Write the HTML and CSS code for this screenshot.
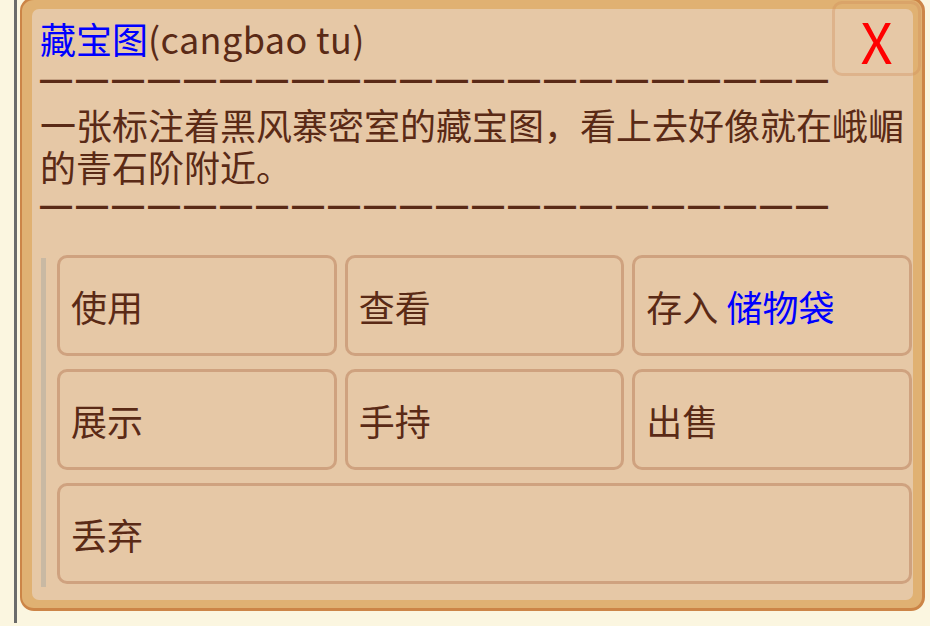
FILE: index.html
```html
<!DOCTYPE html>
<html lang="zh-CN">
<head>
<meta charset="utf-8">
<title>藏宝图</title>
<link rel="stylesheet" href="styles.css">
</head>
<body>
<div class="stage">
  <div class="dialog">
    <div class="panel">
      <div class="title"><span class="link">藏宝图</span><span class="pinyin">(cangbao tu)</span></div>
      <div class="rule">——————————————————————</div>
      <div class="desc">一张标注着黑风寨密室的藏宝图，看上去好像就在峨嵋的青石阶附近。</div>
      <div class="rule rule-end">——————————————————————</div>
      <div class="menu">
        <div class="menu-bar"></div>
        <div class="actions">
          <div class="action">使用</div>
          <div class="action">查看</div>
          <div class="action">存入&nbsp;<span class="link">储物袋</span></div>
          <div class="action">展示</div>
          <div class="action">手持</div>
          <div class="action">出售</div>
          <div class="action action-wide">丢弃</div>
        </div>
      </div>
    </div>
    <div class="close">X</div>
  </div>
</div>
</body>
</html>
```
FILE: styles.css
```css
html, body {
  margin: 0;
  padding: 0;
  background: #fbf6e0;
  overflow: hidden;
}

body {
  font-family: "Noto Sans CJK SC", "Noto Sans", sans-serif;
  color: #5a2a16;
}

.stage {
  height: 626px;
  margin-left: 14px;
  border-left: 3px solid #6b6b6b;
  padding-left: 3px;
  box-sizing: border-box;
}

.dialog {
  position: relative;
  width: 905px;
  margin-top: -3px;
  box-sizing: border-box;
  border: 3px solid #cc8547;
  border-left-width: 2px;
  border-radius: 14px;
  background: #e0b172;
  padding: 9px 9px 8px 10px;
}

.panel {
  background: #e6c8a6;
  border-radius: 7px;
  height: 591px;
  box-sizing: border-box;
  padding: 8px 0 0 8px;
  font-size: 36px;
}

.title {
  line-height: 42px;
  height: 42px;
}

.pinyin {
  letter-spacing: 0.4px;
}

.link {
  color: #0000ff;
}

/* dashed separator lines made of em dashes */
.rule {
  font-family: "Liberation Sans", Arial, sans-serif;
  font-weight: bold;
  font-size: 32px;
  letter-spacing: 4px;
  line-height: 40px;
  white-space: nowrap;
}

.desc {
  line-height: 42px;
  margin-top: 4px;
  padding-right: 8px;
}

.rule-end {
  line-height: 36px;
}

.menu {
  display: flex;
  margin: 32px 0 0 1px;
}

.menu-bar {
  width: 5px;
  flex: none;
  background: #c9b9a3;
  margin: 3px 11px -3px 0;
}

.actions {
  flex: 1;
  display: grid;
  grid-template-columns: repeat(3, 1fr);
  grid-auto-rows: 101px;
  column-gap: 8px;
  row-gap: 13px;
  margin-right: 1px;
}

.action {
  display: flex;
  align-items: center;
  box-sizing: border-box;
  border: 3px solid #cfa27f;
  border-radius: 10px;
  padding-left: 11px;
  line-height: 1;
}

.action-wide {
  grid-column: 1 / -1;
}

.close {
  position: absolute;
  top: 1px;
  right: 1px;
  width: 89px;
  height: 75px;
  box-sizing: border-box;
  border: 3px solid rgba(205, 140, 90, 0.35);
  border-radius: 10px;
  display: flex;
  align-items: center;
  justify-content: center;
  color: #ff0000;
  font-size: 56px;
  line-height: 1;
  padding-top: 2px;
}
```
